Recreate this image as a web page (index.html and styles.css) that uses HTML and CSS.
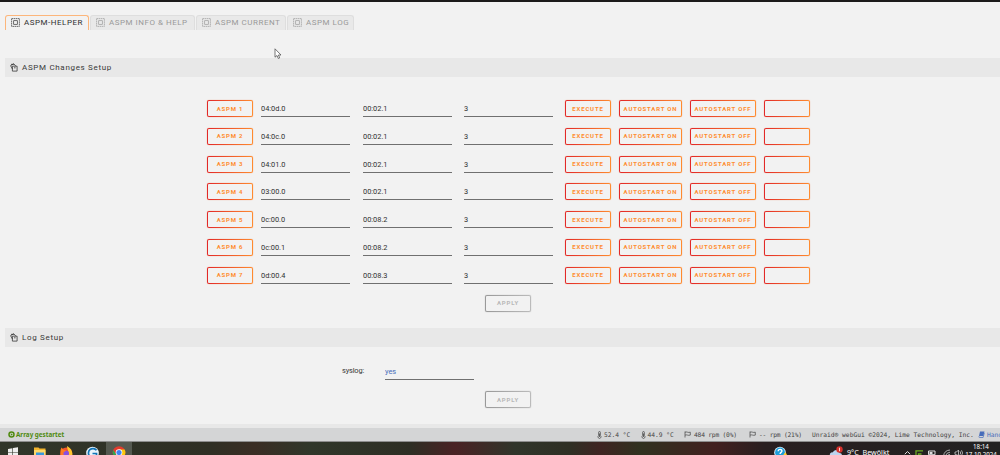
FILE: index.html
```html
<!DOCTYPE html>
<html lang="de">
<head>
    <meta charset="UTF-8">
    <title>ASPM-Helper</title>
    <link rel="stylesheet" href="styles.css">
</head>
<body>
    <svg class="defs">
        <symbol id="box" viewBox="0 0 9 9">
            <rect x=".6" y=".6" width="7.8" height="7.8" fill="none" stroke="currentColor" stroke-width=".7" stroke-dasharray="1.6 .5"/>
            <rect x="2.7" y="2.7" width="3.6" height="3.6" fill="none" stroke="currentColor" stroke-width=".7"/>
        </symbol>
        <symbol id="clone" viewBox="0 0 8 9">
            <path d="M2.4 3.2h4.7v4.9H2.4zM2.4 6L.6 2.6 3.8.8l2 2.3M1 1.4L4 1.2M4 4.8h1.6" fill="none" stroke="currentColor" stroke-width=".8"/>
        </symbol>
        <symbol id="thermo" viewBox="0 0 5 8">
            <path d="M1.6 4.7V1.4a.9.9 0 0 1 1.8 0v3.3a1.5 1.5 0 1 1-1.8 0z" fill="none" stroke="currentColor" stroke-width=".7"/>
            <path d="M2.5 2.5v3.5" stroke="currentColor" stroke-width=".8"/>
        </symbol>
        <symbol id="flag" viewBox="0 0 7 7">
            <path d="M1 .5v6M1 1.2c2-.8 3 .8 5.3 0v2.9c-2.3.8-3.3-.8-5.3 0" fill="none" stroke="currentColor" stroke-width=".7"/>
        </symbol>
    </svg>

    <div class="tabs">
        <div class="tab active"><svg class="tab-icon"><use href="#box"/></svg><span>ASPM-HELPER</span></div>
        <div class="tab tab-info"><svg class="tab-icon"><use href="#box"/></svg><span>ASPM INFO &amp; HELP</span></div>
        <div class="tab tab-current"><svg class="tab-icon"><use href="#box"/></svg><span>ASPM CURRENT</span></div>
        <div class="tab tab-log"><svg class="tab-icon"><use href="#box"/></svg><span>ASPM LOG</span></div>
    </div>

    <div class="title"><svg class="title-icon"><use href="#clone"/></svg>ASPM Changes Setup</div>

    <form class="devices">
        <div class="row">
            <button type="button">ASPM 1</button><input value="04:0d.0"><input value="00:02.1"><input value="3">
            <button type="button">EXECUTE</button><button type="button">AUTOSTART ON</button><button type="button">AUTOSTART OFF</button><button type="button"></button>
        </div>
        <div class="row">
            <button type="button">ASPM 2</button><input value="04:0c.0"><input value="00:02.1"><input value="3">
            <button type="button">EXECUTE</button><button type="button">AUTOSTART ON</button><button type="button">AUTOSTART OFF</button><button type="button"></button>
        </div>
        <div class="row">
            <button type="button">ASPM 3</button><input value="04:01.0"><input value="00:02.1"><input value="3">
            <button type="button">EXECUTE</button><button type="button">AUTOSTART ON</button><button type="button">AUTOSTART OFF</button><button type="button"></button>
        </div>
        <div class="row">
            <button type="button">ASPM 4</button><input value="03:00.0"><input value="00:02.1"><input value="3">
            <button type="button">EXECUTE</button><button type="button">AUTOSTART ON</button><button type="button">AUTOSTART OFF</button><button type="button"></button>
        </div>
        <div class="row">
            <button type="button">ASPM 5</button><input value="0c:00.0"><input value="00:08.2"><input value="3">
            <button type="button">EXECUTE</button><button type="button">AUTOSTART ON</button><button type="button">AUTOSTART OFF</button><button type="button"></button>
        </div>
        <div class="row">
            <button type="button">ASPM 6</button><input value="0c:00.1"><input value="00:08.2"><input value="3">
            <button type="button">EXECUTE</button><button type="button">AUTOSTART ON</button><button type="button">AUTOSTART OFF</button><button type="button"></button>
        </div>
        <div class="row">
            <button type="button">ASPM 7</button><input value="0d:00.4"><input value="00:08.3"><input value="3">
            <button type="button">EXECUTE</button><button type="button">AUTOSTART ON</button><button type="button">AUTOSTART OFF</button><button type="button"></button>
        </div>
        <button type="submit" class="apply" disabled>APPLY</button>
    </form>

    <div class="title"><svg class="title-icon"><use href="#clone"/></svg>Log Setup</div>

    <form class="log-form">
        <div class="log-row">
            <label for="syslog">syslog:</label>
            <input id="syslog" value="yes">
        </div>
        <button type="submit" class="apply" disabled>APPLY</button>
    </form>

    <div class="footer">
        <div class="array-state">
            <svg class="state-icon" viewBox="0 0 7 7"><circle cx="3.5" cy="3.5" r="2.5" fill="none" stroke="#4f8a10" stroke-width="1.5"/><path d="M2.8 2.2l2 1.3-2 1.3z" fill="#4f8a10"/></svg>
            Array gestartet
        </div>
        <div class="sensors">
            <span class="temp"><svg class="thermo"><use href="#thermo"/></svg>52.4 °C</span>
            <span class="temp"><svg class="thermo"><use href="#thermo"/></svg>44.9 °C</span>
            <span class="fan fan-cpu"><svg class="flag"><use href="#flag"/></svg>484 rpm (0%)</span>
            <span class="fan fan-sys"><svg class="flag"><use href="#flag"/></svg>-- rpm (21%)</span>
            <span class="copyright">Unraid® webGui ©2024, Lime Technology, Inc.</span>
            <span class="manual"><svg class="book" viewBox="0 0 7 7"><path d="M2 .5h4.5L5.3 5H1z" fill="#486dba"/><path d="M1 5.2c-.3.8 0 1.3.5 1.3h3.6l1.2-4.5" fill="none" stroke="#486dba" stroke-width=".7"/></svg>Handbuch</span>
        </div>
    </div>

    <div class="taskbar">
        <svg class="app" viewBox="0 0 26 14"><path d="M8 7l4.4-.8v4H8zM13 6.1l5-.9v5h-5zM8 10.8h4.4V14H8zM13 10.8h5V14h-5z" fill="#eee"/></svg>
        <svg class="app" viewBox="0 0 26 14"><path d="M8 5.5h4.5l1 1h6V14H8z" fill="#f3b52e"/><path d="M8 8h11.500v6H8z" fill="#ffd869"/><path d="M10 10.500h8V14h-8z" fill="#3a99dd"/></svg>
        <svg class="app" viewBox="0 0 26 14"><circle cx="14.300" cy="11.500" r="6" fill="#f2542d"/><path d="M15 4c2 1 6 4 5.300 9h-4c1-3-1-5-1.300-9z" fill="#ffc62e"/><circle cx="14" cy="11.500" r="3" fill="#8a50e0"/><path d="M8.500 8l1-2.500L12 8l2.500.3-3 2.200v3.500H8.500z" fill="#ff7a23"/></svg>
        <svg class="app" viewBox="0 0 26 14"><circle cx="14.500" cy="11" r="6.300" fill="#eaf4fb"/><path d="M18.500 8.300a4.500 4.500 0 1 0 0 5.500v-2.300h-4" fill="none" stroke="#1475b8" stroke-width="1.700"/></svg>
        <div class="app-active">
            <svg class="app" viewBox="0 0 26 14"><circle cx="13" cy="10.500" r="6.300" fill="#e33b2e"/><path d="M7.200 8l4 6H8A6.300 6.300 0 0 1 7.200 8z" fill="#2da94f"/><path d="M13 7.500h5.600A6.300 6.300 0 0 1 18.300 14h-4z" fill="#fdc60b"/><circle cx="13" cy="10.500" r="3.300" fill="#fff"/><circle cx="13" cy="10.500" r="2.600" fill="#3f83f0"/></svg>
        </div>
        <div class="tray">
            <svg class="help" viewBox="0 0 14 14"><circle cx="6" cy="10.500" r="5.800" fill="#e7f5fc"/><circle cx="6" cy="10.500" r="4.900" fill="#1d9dd9"/><path d="M4.200 9.200c0-2.600 4-2.300 3.700 0-.1 1.200-1.800 1.300-1.800 2.800M6.100 13v1" fill="none" stroke="#fff" stroke-width="1.400"/><path d="M8.500 14l3-4 2 4z" fill="#ffc928"/></svg>
            <svg class="weather" viewBox="0 0 15 14"><path d="M1 14c-.8-2.500 1-4 2.800-3.600C5 7 10 7 10.500 11c2 0 2.700 1.500 2.300 3z" fill="#bcd3ee"/><circle cx="10.500" cy="7.500" r="3.200" fill="#d5302b"/><path d="M10.500 5.800v3.400" stroke="#fff" stroke-width=".8"/></svg>
            <span class="forecast">9°C&nbsp; Bewölkt</span>
            <svg class="tray-icons" viewBox="0 0 60 14">
                <path d="M.8 12.200l2.700-2.700 2.700 2.700" fill="none" stroke="#ddd" stroke-width="1"/>
                <path d="M12 14V8.800h7M14.500 14v-2h3" fill="none" stroke="#6dac25" stroke-width="1.300"/>
                <path d="M24.500 9h6.500v3.700h-6.500z" fill="none" stroke="#ddd"/><path d="M25.500 10h3v2h-3z" fill="#ddd"/>
                <path d="M39.500 14a7 7 0 0 1 6.500-6M41.500 14a5 5 0 0 1 4.500-3.800M43.500 14a2.500 2.500 0 0 1 2.500-1.700" fill="none" stroke="#bbb" stroke-width=".9"/>
                <path d="M51 10h1.500l2-2v6l-2-1.600H51zM56 9.300q1.400 1.700 0 3.400M57.500 8.300q2.200 2.700 0 5.300" fill="none" stroke="#ccc" stroke-width=".8"/>
            </svg>
            <div class="clock"><span>18:14</span><span>17.10.2024</span></div>
        </div>
    </div>

    <svg class="cursor" viewBox="0 0 8 12"><path d="M1 .8v8.400l2-1.700 1.300 3 1.400-.6-1.300-2.900H7z" fill="#fff" stroke="#555" stroke-width=".8"/></svg>
</body>
</html>
```

FILE: styles.css
```css
* {
    box-sizing: border-box;
}

body {
    margin: 0;
    height: 455px;
    overflow: hidden;
    border-top: 2px solid #1c1b1b;
    background-color: #f2f2f2;
    color: #383838;
    font-family: Roboto, sans-serif;
    font-size: 7.4px;
    display: flex;
    flex-direction: column;
}

svg {
    display: block;
    flex: none;
}

.defs {
    width: 0;
    height: 0;
    position: absolute;
}

/* tabs */
.tabs {
    display: flex;
    gap: 1px;
    margin: 13px 0 28px 5px;
    height: 15px;
}

.tab {
    display: flex;
    align-items: center;
    width: 84px;
    padding: 0 0 1px 5px;
    border: 1px solid #dedede;
    border-bottom: none;
    border-radius: 3px 3px 0 0;
    background-color: #e9e9e9;
    color: #999;
    font-size: 8px;
    letter-spacing: 0.52px;
    white-space: nowrap;
}

.tab.active {
    border-color: #fcb67b;
    background-color: #f2f2f2;
    color: #303030;
}

.tab-info {
    width: 105px;
}

.tab-current {
    width: 90px;
}

.tab-log {
    width: 67px;
}

.tab-icon {
    width: 9px;
    height: 9px;
    margin-right: 4px;
}

/* section titles */
.title {
    display: flex;
    align-items: center;
    flex: none;
    height: 19px;
    margin-left: 5px;
    padding-left: 5px;
    background-color: #e8e8e8;
    font-size: 8px;
    letter-spacing: 0.68px;
}

.title-icon {
    width: 8px;
    height: 9px;
    margin-right: 4px;
}

/* form */
.devices {
    height: 251px;
    padding: 23px 0 0 207px;
}

.row {
    display: grid;
    grid-template-columns: 46px 94px 93px 93px 46px 63px 66px 46px;
    column-gap: 8px;
    height: 27.8px;
    align-items: start;
}

input {
    width: 89px;
    height: 17px;
    padding: 1px 0 0;
    border: none;
    border-bottom: 1px solid #707070;
    background: none;
    color: #303030;
    font-family: Roboto, sans-serif;
    font-size: 7.4px;
}

button {
    height: 17px;
    padding: 0 0 1px;
    border: 1px solid transparent;
    border-radius: 2px;
    background: linear-gradient(#f2f2f2, #f2f2f2) padding-box, linear-gradient(90deg, #e22828, #ff8c2f) border-box;
    box-shadow: 0 0 1px rgba(250, 110, 50, 0.7);
    color: #ff8c2f;
    font-family: Roboto, sans-serif;
    font-size: 6px;
    font-weight: bold;
    letter-spacing: 0.82px;
    white-space: nowrap;
}

.apply {
    display: block;
    width: 46px;
    background: linear-gradient(#f2f2f2, #f2f2f2) padding-box, linear-gradient(90deg, #999, #bbb) border-box;
    box-shadow: 0 0 1px rgba(120, 120, 120, 0.6);
    color: #b8b8b8;
}

.devices .apply {
    margin-left: 278px;
}

.log-form {
    height: 77px;
    padding: 16px 0 0 342px;
}

.log-row {
    display: flex;
    height: 28px;
}

.log-row label {
    width: 43px;
    padding-top: 3px;
    letter-spacing: -0.15px;
}

.log-row input {
    color: #486dba;
}

.log-form .apply {
    margin-left: 143px;
}

/* footer */
.footer {
    display: flex;
    align-items: center;
    flex: none;
    height: 18px;
    padding-left: 8px;
    border-top: 4px solid #e8e8e8;
    border-bottom: 1px solid #8e8e8e;
    background-color: #d4d5d6;
}

.array-state {
    display: flex;
    align-items: center;
    flex: none;
    width: 589px;
    color: #4f8a10;
    font-family: "Noto Sans", sans-serif;
    font-size: 6.3px;
    font-weight: bold;
}

.state-icon {
    width: 7px;
    height: 7px;
    margin-right: 1px;
}

.sensors {
    display: flex;
    flex: none;
    color: #444;
    font-family: "DejaVu Sans Mono", monospace;
    font-size: 6.26px;
    white-space: nowrap;
}

.sensors span {
    display: flex;
    align-items: center;
    flex: none;
}

.temp {
    width: 43.5px;
}

.thermo {
    width: 5px;
    height: 8px;
    margin-right: 2px;
}

.flag {
    width: 7px;
    height: 7px;
    margin-right: 3px;
}

.fan {
    width: 65px;
    letter-spacing: -0.2px;
}

.fan-sys {
    width: 63px;
}

.copyright {
    width: 166px;
}

.sensors .manual {
    color: #486dba;
}

.book {
    width: 7px;
    height: 7px;
    margin-right: 2px;
}

/* taskbar */
.taskbar {
    display: flex;
    flex: none;
    height: 13px;
    overflow: hidden;
    background: linear-gradient(90deg, #30362a 0, #2f2f24 210px, #3a2d24 255px, #30372a 310px, #2e2e24 410px, #4a2224 455px, #30352a 515px, #2f2f24 570px, #3f2422 600px, #30311f 640px, #42201f 715px, #291f20 765px, #222 1000px);
}

.app {
    width: 26px;
    height: 14px;
}

.app-active {
    margin-left: 2px;
    background-color: #555950;
}

.tray {
    display: flex;
    margin-left: 642px;
    color: #fff;
    font-family: "Noto Sans", sans-serif;
    white-space: nowrap;
}

.help {
    width: 14px;
    height: 14px;
    margin-right: 41px;
}

.weather {
    width: 15px;
    height: 14px;
    margin-right: 3px;
}

.forecast {
    width: 57px;
    padding-top: 4px;
    font-size: 7.2px;
    line-height: 12px;
}

.tray-icons {
    width: 60px;
    height: 14px;
}

.clock {
    display: flex;
    flex-direction: column;
    align-items: center;
    width: 34px;
    padding-top: 1px;
    font-size: 6.2px;
    line-height: 8px;
}

.cursor {
    position: absolute;
    left: 274px;
    top: 48px;
    width: 8px;
    height: 12px;
}
```
